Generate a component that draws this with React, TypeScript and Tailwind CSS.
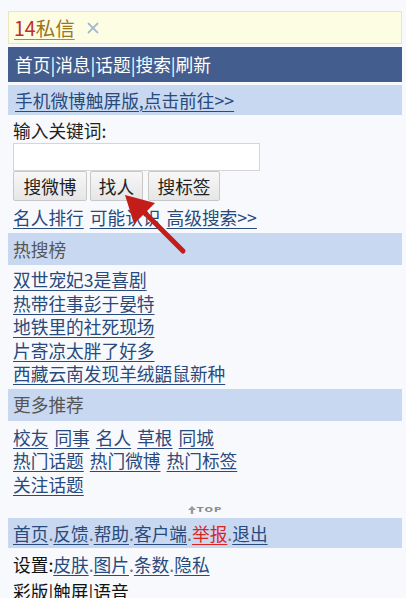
import { X } from 'lucide-react'

const hotList = [
    '双世宠妃3是喜剧',
    '热带往事彭于晏特',
    '地铁里的社死现场',
    '片寄凉太胖了好多',
    '西藏云南发现羊绒鼯鼠新种',
]

const moreRows = [
    ['校友', '同事', '名人', '草根', '同城'],
    ['热门话题', '热门微博', '热门标签'],
    ['关注话题'],
]

function Link({ children, red }: { children: React.ReactNode; red?: boolean }) {
    return (
        <a
            href="#"
            className={
                red
                    ? 'text-[#d9251d] underline decoration-1 underline-offset-[3px]'
                    : 'text-[#284a7c] underline decoration-1 underline-offset-[3px]'
            }
        >
            {children}
        </a>
    )
}

function SectionHead({ title }: { title: string }) {
    return (
        <div className="mx-[8px] mr-[4px] flex h-[32px] items-center bg-[#c9d8f1] px-[5px] text-[#555]">
            {title}
        </div>
    )
}

export default function App() {
    return (
        <div className="relative h-[598px] overflow-hidden bg-[#f8f9fc] pt-[11px] font-[family-name:'Noto_Sans_CJK_SC','Noto_Sans',sans-serif] text-[17.7px] leading-[23px] text-[#111]">
            {/* message notice */}
            <div className="ml-[8px] mr-[4px] flex h-[33px] items-center gap-[9px] border border-[#ebe7b8] bg-[#fdfde3] px-[5px]">
                <a href="#" className="text-[19.5px] underline decoration-[#b08a2a] decoration-1 underline-offset-[3px]">
                    <span className="text-[#c0302a]">14</span>
                    <span className="text-[#9a7420]">私信</span>
                </a>
                <X className="h-[18px] w-[18px] text-[#a9b9cf]" strokeWidth={2.4} />
            </div>

            {/* top nav */}
            <div className="ml-[8px] mr-[4px] mt-[3px] flex h-[35px] items-center bg-[#435e8e] px-[7px] text-white">
                首页|消息|话题|搜索|刷新
            </div>

            <div className="ml-[8px] mr-[4px] mt-[3px] flex h-[30px] items-center bg-[#c9d8f1] px-[7px]">
                <Link>手机微博触屏版,点击前往&gt;&gt;</Link>
            </div>

            {/* search */}
            <div className="px-[13px] pt-[4px]">
                <div className="text-[#222]">输入关键词:</div>
                <input className="mt-[1px] block h-[28px] w-[247px] border border-[#d6d6d6] bg-white" />
                <div className="flex h-[30px] gap-[3px]">
                    <button className="w-[74px] rounded-[2px] border border-[#c8c8c8] bg-gradient-to-b from-[#f7f7f7] to-[#e6e6e6] text-[#222]">
                        搜微博
                    </button>
                    <button className="w-[53px] rounded-[2px] border border-[#c8c8c8] bg-gradient-to-b from-[#f7f7f7] to-[#e6e6e6] text-[#222]">
                        找人
                    </button>
                    <button className="ml-[2px] w-[72px] rounded-[2px] border border-[#c8c8c8] bg-gradient-to-b from-[#f7f7f7] to-[#e6e6e6] text-[#222]">
                        搜标签
                    </button>
                </div>
                <div className="flex h-[32px] items-center gap-[6px]">
                    <Link>名人排行</Link>
                    <Link>可能认识</Link>
                    <Link>高级搜索&gt;&gt;</Link>
                </div>
            </div>

            <SectionHead title="热搜榜" />
            <ul className="px-[13px] py-[3px] leading-[23.5px]">
                {hotList.map((item) => (
                    <li key={item}>
                        <Link>{item}</Link>
                    </li>
                ))}
            </ul>

            <SectionHead title="更多推荐" />
            <div className="px-[13px] py-[5px] leading-[23.5px]">
                {moreRows.map((row, i) => (
                    <div key={i} className="flex gap-[6px]">
                        {row.map((item) => (
                            <Link key={item}>{item}</Link>
                        ))}
                    </div>
                ))}
            </div>

            {/* back to top */}
            <div className="flex h-[17px] items-center justify-center gap-[1px] pl-[4px] font-[family-name:'DejaVu_Sans',sans-serif] text-[10px] font-bold leading-none tracking-[1px] text-[#8a8a8a]">
                <svg width="8" height="8" viewBox="0 0 8 8">
                    <path d="M4 0 L8 4 L5.2 4 L5.2 8 L2.8 8 L2.8 4 L0 4 Z" fill="#9a9a9a" />
                </svg>
                <span className="scale-y-[0.75]">TOP</span>
            </div>

            {/* footer */}
            <div className="ml-[8px] mr-[4px] flex h-[30px] items-center bg-[#c9d8f1] px-[5px] text-[#777]">
                <Link>首页</Link>.<Link>反馈</Link>.<Link>帮助</Link>.<Link>客户端</Link>.<Link red>举报</Link>.<Link>退出</Link>
            </div>
            <div className="flex h-[32px] items-center px-[13px] text-[#777]">
                <span className="text-[#111]">设置:</span>
                <Link>皮肤</Link>.<Link>图片</Link>.<Link>条数</Link>.<Link>隐私</Link>
            </div>
            <div className="px-[13px] text-[#111]">彩版|触屏|语音</div>

            {/* annotation arrow */}
            <svg className="absolute left-0 top-0" width="406" height="598" viewBox="0 0 406 598">
                <line x1="183" y1="251" x2="142" y2="210" stroke="#c21d18" strokeWidth="5" strokeLinecap="round" />
                <polygon points="125,195 155,203 134,224" fill="#c21d18" />
            </svg>
        </div>
    )
}
